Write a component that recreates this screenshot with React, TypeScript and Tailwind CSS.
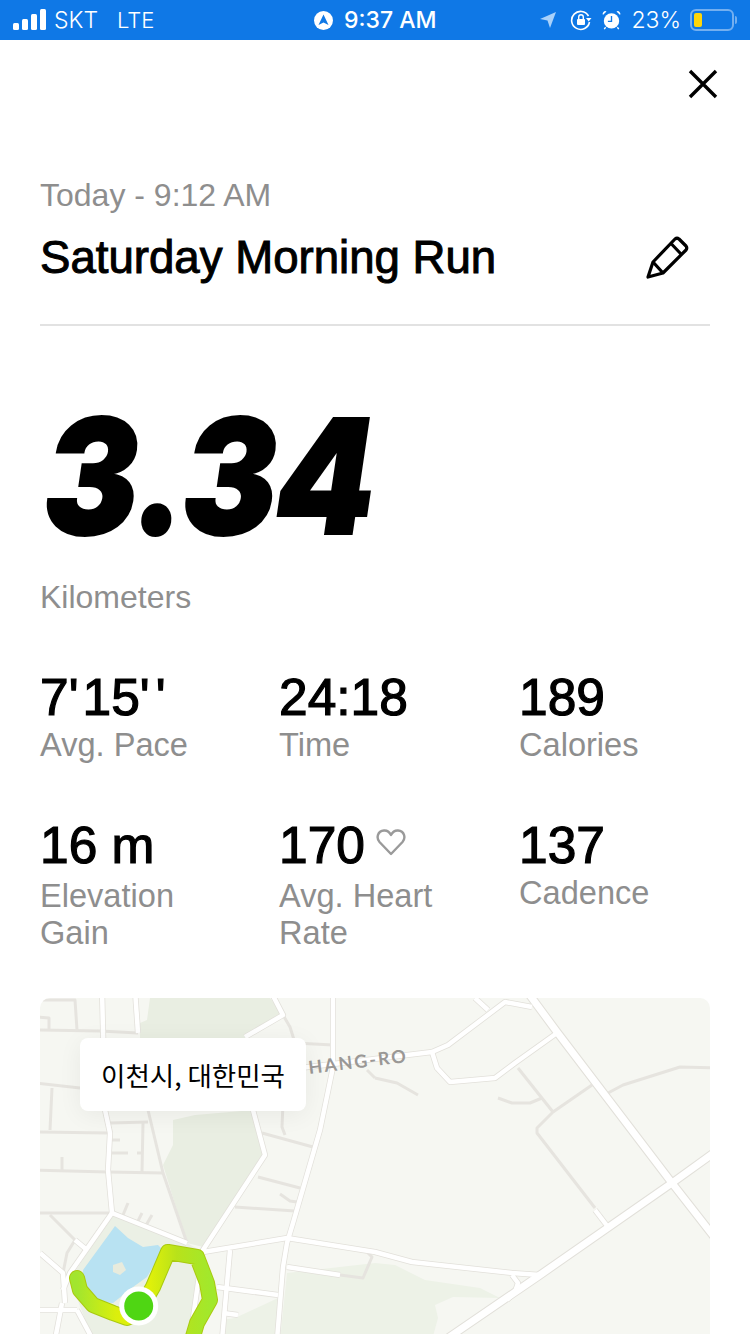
import type { ReactNode } from 'react'

const majorRoads = [
  'M333 990 L333 1067 L320 1130 L293 1223 L287 1243 L283 1267 L277 1340',
  'M253 1110 L265 1155 L203 1250 L197 1290 L190 1340',
  'M203 1252 L287 1238 L375 1252 L412 1262 L512 1273 L540 1275',
  'M557 1033 L515 1063 L495 1078 L450 1082 L437 1068 L432 1052 L300 1068',
  'M432 1052 L448 1045 L505 1002 L532 1007',
  'M475 998 L488 1010',
  'M595 1210 L608 1227',
  'M102 990 L105 1110 L110 1133 L108 1170 L112 1213',
  'M135 990 L138 1033',
  'M112 1213 L70 1273 L63 1290',
  'M112 1213 L187 1243',
  'M75 1240 L87 1250',
  'M40 1253 L63 1273 L65 1303',
  'M35 1310 L77 1310',
  'M55 1340 L62 1303',
  'M77 1310 L93 1340',
  'M270 990 L283 1015 L245 1037',
  'M287 1267 L340 1275',
  'M217 1287 L278 1295',
  'M230 1250 L222 1340',
  'M223 1313 L238 1315',
  'M512 1275 L518 1283 L515 1292 L507 1300',
]

const wideRoads = [
  'M445 1340 L540 1275 L672 1183 L715 1152',
  'M526 990 L557 1032 L672 1183 L715 1238',
]

const minorRoads = [
  'M518 1068 L553 1112',
  'M592 1085 L553 1112 L537 1128 L537 1133 L595 1208',
  'M608 1093 L623 1085 L680 1067 L715 1068',
  'M498 1098 L512 1103 L530 1103 L542 1098',
  'M375 1078 L397 1083 L418 1095',
  'M35 1030 L100 1031 L138 1033',
  'M35 1017 L49 1018 L49 1030',
  'M43 1000 L75 1000 L77 1030',
  'M35 1083 L80 1088',
  'M52 1088 L50 1130',
  'M35 1132 L107 1133',
  'M110 1123 L148 1122',
  'M143 1123 L142 1172',
  'M112 1140 L120 1140',
  'M112 1153 L128 1153',
  'M137 1153 L142 1153',
  'M35 1170 L108 1172 L163 1173',
  'M62 1157 L62 1170',
  'M148 1110 L163 1173 L187 1243',
  'M35 1213 L112 1213',
  'M50 1215 L75 1240 L67 1253 L63 1273',
  'M128 1203 L123 1215',
  'M142 1213 L137 1223',
  'M152 1215 L145 1227',
  'M283 1015 L290 1027 L295 1043 L333 1045',
  'M262 1133 L313 1147',
  'M283 1103 L282 1127 L285 1135',
  'M258 1177 L300 1188',
  'M280 1194 L290 1201 L297 1202',
  'M235 1207 L295 1211',
  'M367 1070 L375 1078',
  'M340 1275 L363 1278 L372 1257 L368 1253',
]

const routePath =
  'M77 1278 L80 1290 L93 1305 L113 1313 L127 1318 L138 1313 L153 1287 L168 1252 L197 1257 L207 1283 L210 1300 L197 1323 L192 1340'

function MapDrawing() {
  return (
    <svg viewBox="40 998 670 400" className="block w-full h-full">
      <defs>
        <linearGradient id="route" gradientUnits="userSpaceOnUse" x1="77" y1="0" x2="210" y2="0">
          <stop offset="0" stopColor="#a2e52e" />
          <stop offset="0.3" stopColor="#dcef0c" />
          <stop offset="0.55" stopColor="#dff00a" />
          <stop offset="0.75" stopColor="#b8e21a" />
          <stop offset="1" stopColor="#a2e82c" />
        </linearGradient>
      </defs>
      <path d="M150 998 L147 1020 L140 1023 L140 1040 L245 1040 L283 1015 L270 998 Z" fill="#e9eee2" />
      <path d="M173 1120 L195 1115 L253 1110 L265 1155 L203 1247 L187 1243 L163 1165 L173 1145 Z" fill="#e9eee2" />
      <path d="M112 1213 L187 1243 L203 1252 L190 1340 L93 1340 L70 1280 Z" fill="#ebf0e5" />
      <path d="M287 1273 L375 1263 L395 1265 L425 1280 L480 1288 L500 1298 L453 1297 L435 1305 L438 1318 L432 1340 L280 1340 Z" fill="#edf2e7" />
      <path d="M222 1320 L235 1318 L278 1298 L277 1340 L222 1340 Z" fill="#edf2e7" />
      <path d="M115 1226 L128 1238 L143 1247 L158 1245 L163 1250 L147 1277 L133 1287 L113 1303 L97 1302 L82 1283 L83 1270 L110 1233 Z" fill="#b8e2f2" />
      <path d="M113 1265 L122 1262 L126 1270 L120 1275 L113 1272 Z" fill="#e8ebdd" />
      <g fill="none" strokeLinejoin="round">
        {minorRoads.map((d) => (
          <path key={d} d={d} stroke="#e6e4df" strokeWidth="3" />
        ))}
        {majorRoads.map((d) => (
          <path key={d} d={d} stroke="#e2e0da" strokeWidth="6" />
        ))}
        {wideRoads.map((d) => (
          <path key={d} d={d} stroke="#e2e0da" strokeWidth="9" />
        ))}
        {majorRoads.map((d) => (
          <path key={d} d={d} stroke="#ffffff" strokeWidth="4.5" />
        ))}
        {wideRoads.map((d) => (
          <path key={d} d={d} stroke="#ffffff" strokeWidth="7" />
        ))}
      </g>
      <path d={routePath} fill="none" stroke="#a9c90f" strokeWidth="16" strokeLinecap="round" strokeLinejoin="round" />
      <path d={routePath} fill="none" stroke="url(#route)" strokeWidth="14" strokeLinecap="round" strokeLinejoin="round" />
      <circle cx="138.7" cy="1306" r="19.5" fill="#ffffff" />
      <circle cx="138.7" cy="1306" r="14.5" fill="#4fd613" />
    </svg>
  )
}

function StatusBar() {
  return (
    <div className="h-10 bg-[#0f78e6] text-white flex items-center pl-[13px] pr-[13px] font-['Inter',sans-serif] text-[23px]">
      <div className="flex items-center w-[301px]">
        <svg width="34" height="22" viewBox="0 0 34 22" fill="#fff">
          <rect x="0" y="14" width="6" height="7" rx="1.5" />
          <rect x="9" y="10" width="6" height="11" rx="1.5" />
          <rect x="18" y="5" width="6" height="16" rx="1.5" />
          <rect x="27" y="0" width="6" height="21" rx="1.5" />
        </svg>
        <span className="ml-[7px] font-light">SKT</span>
        <span className="ml-[19px] font-light text-[22px]">LTE</span>
      </div>
      <div className="flex items-center">
        <svg width="19" height="19" viewBox="0 0 19 19">
          <circle cx="9.5" cy="9.5" r="9.5" fill="#fff" />
          <path d="M9.5 3.5 L14.5 14 L9.5 11.5 L4.5 14 Z" fill="#0f78e6" />
        </svg>
        <span className="ml-[11px] font-medium">9:37 AM</span>
      </div>
      <div className="flex items-center ml-auto">
        <svg width="18" height="18" viewBox="0 0 18 18" className="mr-[13px]">
          <path d="M17 1 L11 17 L8.5 9.5 L1 8 Z" fill="#a9d1fa" />
        </svg>
        <svg width="22" height="22" viewBox="0 0 22 22" className="mr-[10px]" fill="none">
          <path d="M18.5 7 A9 9 0 1 0 19.5 13" stroke="#fff" strokeWidth="1.6" />
          <path d="M16 9 L21.5 9 L18.7 12.5 Z" fill="#fff" />
          <rect x="7" y="10" width="8" height="6" rx="1" fill="#fff" />
          <path d="M8.7 10 V8 A2.3 2.3 0 0 1 13.3 8 V10" stroke="#fff" strokeWidth="1.4" />
        </svg>
        <svg width="19" height="22" viewBox="0 0 21 22" className="mr-[10px]">
          <circle cx="10.5" cy="12" r="8.5" fill="#fff" />
          <path d="M10.5 6.5 V12.5 H6.5" fill="none" stroke="#0f78e6" strokeWidth="1.5" />
          <path d="M1 5.5 L5 1.5 A3 3 0 0 0 1 5.5 Z M20 5.5 L16 1.5 A3 3 0 0 1 20 5.5 Z" fill="#fff" />
          <path d="M4 19 L2.5 21 M17 19 L18.5 21" stroke="#fff" strokeWidth="1.5" />
        </svg>
        <span className="font-light">23%</span>
        <div className="ml-[9px] w-[44px] h-[22px] rounded-[6px] border-2 border-[#73aff0] p-[2px]">
          <div className="w-[8px] h-[14px] rounded-[2px] bg-[#ffd60a]" />
        </div>
        <div className="ml-[1px] w-[2px] h-[8px] rounded-r bg-[#73aff0]" />
      </div>
    </div>
  )
}

type StatProps = { value: ReactNode; label: string; heart?: boolean; wrapped?: boolean }

function Stat({ value, label, heart, wrapped }: StatProps) {
  return (
    <div>
      <div className="flex items-center h-[50px]">
        <span className="text-[51.5px] leading-[50px] text-black [-webkit-text-stroke:1.2px_#000]">{value}</span>
        {heart && (
          <svg width="30" height="28" viewBox="0 0 30 28" fill="none" className="ml-[11px] mb-[6px]">
            <path
              d="M15 26 L3.5 14 C0 10 1.5 3 8 2.5 C11 2.3 13.5 4 15 7 C16.5 4 19 2.3 22 2.5 C28.5 3 30 10 26.5 14 Z"
              stroke="#9a9a9a"
              strokeWidth="2.4"
              strokeLinejoin="round"
            />
          </svg>
        )}
      </div>
      <div className={`text-[32.6px] leading-[37px] text-[#8e8e8e] max-w-[200px] ${wrapped ? 'mt-[7px] mb-[-1px]' : 'mt-[4px]'}`}>{label}</div>
    </div>
  )
}

export default function App() {
  return (
    <div className="w-[750px] h-[1334px] overflow-hidden bg-white font-['Liberation_Sans',sans-serif]">
      <StatusBar />

      <div className="flex justify-end pt-[29px] pr-[32px]">
        <svg width="30" height="30" viewBox="0 0 30 30" fill="none" stroke="#000" strokeWidth="3.4">
          <path d="M2 2 L28 28 M28 2 L2 28" />
        </svg>
      </div>

      <div className="px-10">
        <div className="mt-[78px] text-[32px] leading-[37px] text-[#8e8e8e]">Today - 9:12 AM</div>
        <div className="mt-[19px] flex items-center justify-between pr-[21px]">
          <h1 className="text-[45.6px] leading-[50px] text-black [-webkit-text-stroke:1px_#000]">Saturday Morning Run</h1>
          <svg width="44" height="44" viewBox="0 0 44 44" fill="none" stroke="#000" strokeWidth="3.2" strokeLinejoin="round">
            <path d="M3 41 L8 26 L30 3 Q32 1.5 34 3 L41 10 Q42.5 12 41 14 L18 37 Z" />
            <path d="M8 26 L18 37 M26.5 8 L36 18" />
          </svg>
        </div>
        <div className="mt-[41px] h-[2px] bg-[#e2e2e2]" />

        <div className="mt-[64px] ml-[4px] text-[160px] leading-[172px] tracking-[-2px] italic font-black text-black font-['Inter',sans-serif] scale-x-[0.885] origin-left [-webkit-text-stroke:2px_#000]">3.34</div>
        <div className="mt-[17px] text-[32px] leading-[37px] text-[#8e8e8e]">Kilometers</div>

        <div className="mt-[56px] grid gap-y-[57px] w-[720px] grid-cols-[239px_240px_1fr]">
          <Stat
            value={
              <>
                7<span className="tracking-[4px]">'</span>15<span className="tracking-[6px]">''</span>
              </>
            }
            label="Avg. Pace"
          />
          <Stat value="24:18" label="Time" />
          <Stat value="189" label="Calories" />
          <Stat value="16 m" label="Elevation Gain" wrapped />
          <Stat value="170" label="Avg. Heart Rate" heart wrapped />
          <Stat value="137" label="Cadence" />
        </div>

        <div className="relative mt-[48px] w-full h-[400px] rounded-[10px] overflow-hidden bg-[#f6f7f2]">
          <MapDrawing />
          <div className="absolute left-[268px] top-[50px] text-[18px] tracking-[2px] font-bold text-[#9a9896] -rotate-[7deg] font-['Lato',sans-serif]">HANG-RO</div>
          <div className="absolute left-[40px] top-[40px] w-[226px] h-[73px] rounded-[8px] bg-white shadow-[0_4px_24px_rgba(0,0,0,0.06)] flex items-center justify-center text-[26.5px] text-black font-['Noto_Sans_CJK_KR',sans-serif]">
            이천시, 대한민국
          </div>
        </div>
      </div>
    </div>
  )
}
